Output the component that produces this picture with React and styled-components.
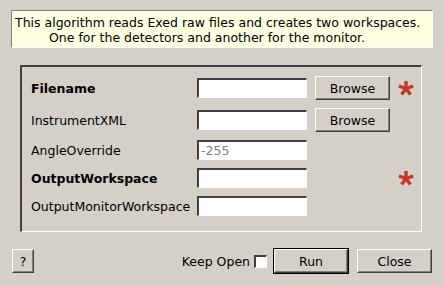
import React from 'react';
import styled, {createGlobalStyle, css} from 'styled-components';

const Global = createGlobalStyle`
  html, body {
    margin: 0;
    padding: 0;
    background: #d4d0c8;
  }
  body {
    font-family: 'DejaVu Sans', 'Liberation Sans', sans-serif;
    font-size: 12.5px;
    color: #000;
  }
`;

const sunken = css`
  border-style: solid;
  border-width: 1px;
  border-color: #808080 #fff #fff #808080;
`;

const raised = css`
  border: 1px solid;
  border-color: #fff #404040 #404040 #fff;
  box-shadow: inset -1px -1px 0 #808080;
`;

const Dialog = styled.div`
  width: 444px;
  height: 286px;
  box-sizing: border-box;
  padding-top: 10px;
  display: flex;
  flex-direction: column;
`;

const Info = styled.div`
  ${sunken}
  margin: 0 11px;
  height: 38px;
  box-sizing: border-box;
  background: #ffffe1;
  line-height: 15px;
  padding: 4px 0 0 3px;
  white-space: nowrap;
`;

const InfoLine = styled.div`
  padding-left: ${p => p.$indent || 0}px;
`;

const Group = styled.div`
  margin: 17px 22px 0 20px;
  height: 167px;
  box-sizing: border-box;
  border-style: solid;
  border-width: 2px 1px 1px 2px;
  border-color: #404040 #fff #fff #404040;
  padding: 9px 0 0 9px;
  display: grid;
  grid-template-columns: 158px 110px 75px 15px;
  grid-template-rows: 24px 24px 20px 20px 20px;
  column-gap: 8px;
  row-gap: 8px;
  align-items: center;
`;

const Label = styled.span`
  font-weight: ${p => (p.$bold ? 'bold' : 'normal')};
  white-space: nowrap;
  grid-column: 1;
`;

const Field = styled.input`
  border-style: solid;
  border-width: 2px 1px 1px 2px;
  border-color: #404040 #fff #fff #404040;
  outline: none;
  width: 110px;
  height: 20px;
  box-sizing: border-box;
  background: #fff;
  font-family: inherit;
  font-size: 12.5px;
  padding: 0 2px;
  margin: 0;
  grid-column: 2;
  &::placeholder {
    color: #808080;
  }
`;

const Button = styled.button`
  ${raised}
  background: #d4d0c8;
  font-family: inherit;
  font-size: 12.5px;
  color: #000;
  padding: 0;
  margin: 0 0 0 ${p => p.$gap || 0}px;
  width: ${p => p.$w || 75}px;
  height: 24px;
  box-sizing: border-box;
  ${p => p.$default && css`
    outline: 1px solid #000;
    width: ${p.$w - 2}px;
    margin: 0 1px;
  `}
`;

const GridButton = styled(Button)`
  grid-column: 3;
`;

const Star = styled.svg`
  grid-column: 4;
  width: 16px;
  height: 16px;
`;

const Footer = styled.div`
  margin: 16px 12px 0 12px;
  height: 26px;
  display: flex;
  align-items: center;
`;

const Spacer = styled.div`
  flex: 1;
`;

const KeepOpen = styled.label`
  display: flex;
  align-items: center;
  gap: 4px;
  margin-right: 6px;
`;

const Check = styled.span`
  display: inline-block;
  width: 13px;
  height: 13px;
  box-sizing: border-box;
  background: #fff;
  border-style: solid;
  border-width: 2px 1px 1px 2px;
  border-color: #404040 #fff #fff #404040;
`;

const Asterisk = () => (
  <Star viewBox="0 0 16 16">
    <g stroke="#c0392b" strokeWidth="3.4" strokeLinecap="butt">
      {[0, 72, 144, 216, 288].map(a => (
        <line key={a} x1="8" y1="8.5" x2="8" y2="1" transform={`rotate(${a} 8 8.5)`} />
      ))}
    </g>
  </Star>
);

export default function App() {
  return (
    <Dialog>
      <Global />
      <Info>
        <InfoLine>This algorithm reads Exed raw files and creates two workspaces.</InfoLine>
        <InfoLine $indent={34}>One for the detectors and another for the monitor.</InfoLine>
      </Info>
      <Group>
        <Label $bold>Filename</Label>
        <Field />
        <GridButton>Browse</GridButton>
        <Asterisk />

        <Label>InstrumentXML</Label>
        <Field />
        <GridButton>Browse</GridButton>

        <Label>AngleOverride</Label>
        <Field placeholder="-255" />

        <Label $bold>OutputWorkspace</Label>
        <Field />
        <span />
        <Asterisk />

        <Label>OutputMonitorWorkspace</Label>
        <Field />
      </Group>
      <Footer>
        <Button $w={22}>?</Button>
        <Spacer />
        <KeepOpen>
          Keep Open <Check />
        </KeepOpen>
        <Button $w={76} $default>Run</Button>
        <Button $gap={8} $w={75}>Close</Button>
      </Footer>
    </Dialog>
  );
}
